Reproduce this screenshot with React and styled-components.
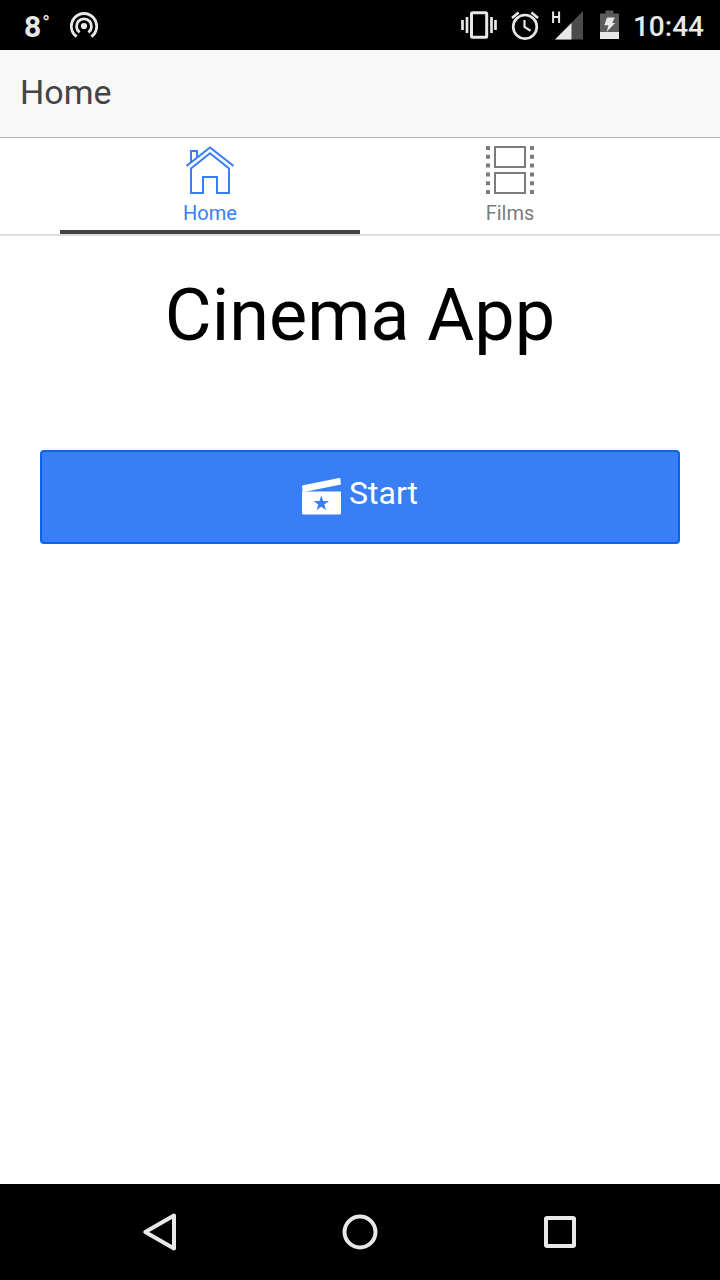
import React from "react";
import styled, { createGlobalStyle } from "styled-components";

const GlobalStyle = createGlobalStyle`
  * { box-sizing: border-box; }
  body { margin: 0; background: #fff; font-family: Roboto, "Liberation Sans", sans-serif; }
  svg { display: block; flex: none; }
`;

const Screen = styled.div`
  display: flex;
  flex-direction: column;
  width: 720px;
  height: 1280px;
  overflow: hidden;
  background: #fff;
`;

const StatusBar = styled.header`
  display: flex;
  align-items: center;
  justify-content: space-between;
  height: 50px;
  flex: none;
  padding: 2px 16px 0 24px;
  background: #000;
  color: #e8e8e8;
`;

const StatusGroup = styled.div`
  display: flex;
  align-items: center;
  gap: ${(p) => p.$gap}px;
`;

const Temperature = styled.div`
  display: flex;
  width: 26px;
  font-size: 30px;
  line-height: 36px;
  font-weight: 700;
  padding-top: 1px;
`;

const Degree = styled.span`
  margin-left: 1px;
  font-size: 20px;
  line-height: 28px;
  font-weight: 500;
`;

const Clock = styled.time`
  margin-left: 2px;
  font-size: 28px;
  line-height: 36px;
  font-weight: 500;
  padding-top: 1px;
`;

const AppHeader = styled.div`
  display: flex;
  align-items: center;
  height: 88px;
  flex: none;
  padding: 0 20px 4px;
  background: #f8f8f8;
  border-bottom: 1px solid #b2b2b2;
`;

const PageTitle = styled.h1`
  margin: 0;
  font-size: 34px;
  line-height: 44px;
  font-weight: 400;
  color: #444;
`;

const TabBar = styled.nav`
  display: flex;
  justify-content: center;
  height: 98px;
  flex: none;
  border-bottom: 2px solid #ddd;
`;

const Tab = styled.a`
  display: flex;
  flex-direction: column;
  align-items: center;
  width: 300px;
  padding-top: 8px;
  color: ${(p) => (p.$active ? "#387ef5" : "#7b7b7b")};
  border-bottom: 4px solid ${(p) => (p.$active ? "#444" : "transparent")};
`;

const TabLabel = styled.span`
  margin-top: 7px;
  font-size: 20px;
  line-height: 24px;
`;

const Content = styled.main`
  display: flex;
  flex-direction: column;
  flex: 1;
  padding: 0 40px;
`;

const Heading = styled.h2`
  margin: 37px 0 91px;
  font-size: 72px;
  line-height: 86px;
  font-weight: 400;
  text-align: center;
  color: #000;
`;

const StartButton = styled.button`
  display: flex;
  align-items: center;
  justify-content: center;
  gap: 8px;
  height: 94px;
  padding: 0 0 8px;
  border: 2px solid #0c63ee;
  border-radius: 4px;
  background: #387ef5;
  color: #fff;
  font: 400 32px/40px Roboto, "Liberation Sans", sans-serif;
`;

const IconDrop = styled.span`
  display: flex;
  padding-top: 7px;
`;

const NavBar = styled.footer`
  display: flex;
  align-items: center;
  justify-content: space-between;
  height: 96px;
  flex: none;
  padding: 0 140px;
  background: #000;
`;

const CastIcon = () => (
  <svg width="28" height="28" viewBox="0 0 28 28" fill="none" stroke="#e8e8e8" strokeWidth="2.8">
    <circle cx="14" cy="14" r="3.1" fill="#e8e8e8" stroke="none" />
    <path d="M9.6 20.4A7.5 7.5 0 1 1 18.4 20.4" />
    <path d="M6.7 24.6A12.7 12.7 0 1 1 21.3 24.6" />
  </svg>
);

const VibrateIcon = () => (
  <svg width="38" height="30" viewBox="0 0 38 30" fill="none" stroke="#e8e8e8">
    <rect x="10.5" y="1.8" width="15.200" height="24.400" rx="1" strokeWidth="3" />
    <path d="M1.5 9v10M34.5 9v10M6 6v16M30.500 6v16" strokeWidth="2.7" />
  </svg>
);

const AlarmIcon = () => (
  <svg width="28" height="31" viewBox="0 0 28 31" fill="none" stroke="#e8e8e8" strokeWidth="2.7">
    <circle cx="14" cy="15.8" r="11.8" />
    <path d="M13.5 9v7l6 3.8" strokeWidth="2.2" />
    <path d="M1 7 7.600 1.500M27 7 20.400 1.500" />
  </svg>
);

const SignalIcon = () => (
  <svg width="37" height="30" viewBox="0 0 37 30">
    <path d="M32 0v28.500H4z" fill="#4b4b4b" />
    <path d="M20.5 12V28.500H4z" fill="#e8e8e8" />
    <path d="M2.100 .5v11.500M8.100 .5v11.500M2.100 6h6" stroke="#e8e8e8" strokeWidth="2" />
  </svg>
);

const BatteryIcon = () => (
  <svg width="19" height="32" viewBox="0 0 19 32">
    <path d="M5.5 .5h8v3H19v19H0v-19h5.500z" fill="#5b5b5b" />
    <path d="M0 22h19v7H0z" fill="#e8e8e8" />
    <path d="M7 7.500h7.800l-2.600 5.500h3L6.500 22l2-6.800H4.300z" fill="#e8e8e8" />
  </svg>
);

const HouseIcon = () => (
  <svg width="48" height="48" viewBox="0 0 48 48" fill="none" stroke="currentColor" strokeWidth="2">
    <path d="M.5 20 24 1.500l23.500 18.500" />
    <path d="M5 47V22.400L24 7.300l19 15.100V47H31V31H17v16z" />
    <path d="M5 17V5h6v7" />
  </svg>
);

const FilmIcon = () => (
  <svg width="48" height="48" viewBox="0 0 48 48" fill="none" stroke="currentColor">
    <path d="M9 1h30v20H9zM9 27h30v20H9z" strokeWidth="2" />
    <path d="M2 0v48M46 0v48" strokeWidth="4" strokeDasharray="4 4.8" />
  </svg>
);

const ClapperIcon = () => (
  <svg width="39" height="37" viewBox="0 0 39 37" fill="currentColor">
    <path d="M1 7.200 37.200.1q1-.2 1.200.8L39 6.500 .8 14.200 0 9Q0 7.500 1 7.200z" />
    <path
      fillRule="evenodd"
      d="M.5 13.500H38.500q.5 0 .5 1V35q0 1.500-1.500 1.500H1.500Q0 36.500 0 35V13.500zM19.300 17.600l-1.800 5.500h-5.900l4.700 3.500-1.800 5.600 4.800-3.500 4.800 3.500-1.800-5.600 4.700-3.500h-5.900z"
    />
  </svg>
);

const BackIcon = () => (
  <svg width="40" height="40" viewBox="0 0 40 40" fill="none" stroke="#e8e8e8" strokeWidth="4" strokeLinejoin="round">
    <path d="M34 3.500v33L5.300 20z" />
  </svg>
);

const CircleIcon = () => (
  <svg width="40" height="40" viewBox="0 0 40 40" fill="none" stroke="#e8e8e8" strokeWidth="4">
    <circle cx="20" cy="20" r="15.500" />
  </svg>
);

const SquareIcon = () => (
  <svg width="40" height="40" viewBox="0 0 40 40" fill="none" stroke="#e8e8e8" strokeWidth="4">
    <rect x="6" y="6" width="28" height="28" rx="1" />
  </svg>
);

export default function App() {
  return (
    <Screen>
      <GlobalStyle />
      <StatusBar>
        <StatusGroup $gap={20}>
          <Temperature>
            8<Degree>°</Degree>
          </Temperature>
          <CastIcon />
        </StatusGroup>
        <StatusGroup $gap={12}>
          <VibrateIcon />
          <AlarmIcon />
          <SignalIcon />
          <BatteryIcon />
          <Clock>10:44</Clock>
        </StatusGroup>
      </StatusBar>
      <AppHeader>
        <PageTitle>Home</PageTitle>
      </AppHeader>
      <TabBar>
        <Tab $active>
          <HouseIcon />
          <TabLabel>Home</TabLabel>
        </Tab>
        <Tab>
          <FilmIcon />
          <TabLabel>Films</TabLabel>
        </Tab>
      </TabBar>
      <Content>
        <Heading>Cinema App</Heading>
        <StartButton>
          <IconDrop>
            <ClapperIcon />
          </IconDrop>
          Start
        </StartButton>
      </Content>
      <NavBar>
        <BackIcon />
        <CircleIcon />
        <SquareIcon />
      </NavBar>
    </Screen>
  );
}
